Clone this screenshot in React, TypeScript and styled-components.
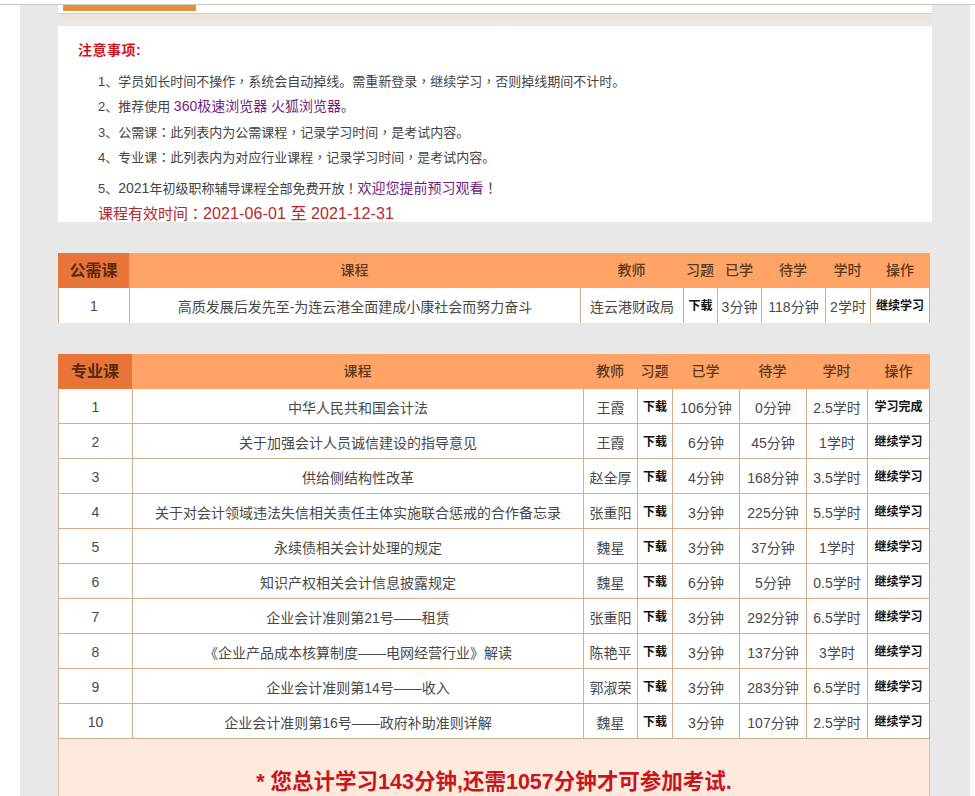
import React from "react";
import styled, { createGlobalStyle } from "styled-components";

const Global = createGlobalStyle`
  html, body { margin: 0; padding: 0; background: #fff; height: 796px; overflow: hidden; }
  body { font-family: "Liberation Sans", "Noto Sans CJK SC", sans-serif; color: #444; }
  #root { height: 796px; overflow: hidden; }
`;

const TopRule = styled.div`height: 4px; border-bottom: 1px solid #c9c9c9;`;
const Panel = styled.main`
  margin-left: 20px; width: 874px; padding: 0 38px; background: #e8e8e8; height: 791px; overflow: hidden;
`;
const TabBar = styled.div`
  height: 8px; background: #fff; border-bottom: 1px solid #edc99a; padding-left: 5px;
`;
const Tab = styled.div`width: 133px; height: 6px; background: #e0923c;`;
const TabShadow = styled.div`height: 12px; background: linear-gradient(#efe3d8, #e9e8ea);`;
const Notice = styled.section`
  background: #fff; height: 184px; padding-top: 12px;
`;
const NoticeTitle = styled.h2`
  margin: 0 0 6px 20px; font-size: 14px; line-height: 24px; font-weight: 700; color: #c8161d; letter-spacing: 0.5px;
`;
const NoticeList = styled.ul`
  list-style: none; margin: 0; padding: 0 0 0 40px; font-size: 13px;
`;
const NoticeItem = styled.li<{ $h: number }>`
  height: ${p => p.$h}px; line-height: ${p => p.$h}px; white-space: nowrap;
`;
const Purple = styled.span`color: #6f1f80;`;
const Larger = styled.span`font-size: 14px;`;
const Mid = styled.span`font-family: "Noto Sans CJK TC", sans-serif;`;
const Validity = styled.li`
  height: 18px; line-height: 18px; font-size: 15px; color: #b22a2e; white-space: nowrap;
`;
const Dates = styled.span`font-size: 16px; letter-spacing: 0.1px;`;
const Table = styled.table<{ $top: number }>`
  display: table; width: 872px; margin-top: ${p => p.$top}px; table-layout: fixed;
  border-collapse: separate; border-spacing: 0; background: #fff;
`;
const HeadCell = styled.th`
  height: 31px; padding: 0 0 4px; background: #ffa366; color: #5c3a20; font-size: 14px; font-weight: 500;
  text-align: center;
`;
const KindCell = styled.th`
  height: 31px; padding: 0 0 4px; background: #e9743a; color: #5a2a10; font-size: 16px; font-weight: 700;
  text-align: center;
`;
const Cell = styled.td<{ $strong?: boolean; $last?: boolean }>`
  height: ${p => (p.$strong ? 32 : 33)}px; padding: ${p => (p.$strong ? "0 0 2px" : "1px 0 0")}; font-size: ${p => (p.$strong ? 12 : 14)}px;
  font-weight: ${p => (p.$strong ? 700 : 400)}; color: ${p => (p.$strong ? "#111" : "#484848")};
  text-align: center; white-space: nowrap; overflow: hidden;
  border-left: 1px solid #cfae8e; border-bottom: 1px solid #cfae8e;
  ${p => p.$last && "border-right: 1px solid #c8a98c;"}
`;
const OpenCell = styled(Cell)`height: ${p => (p.$strong ? 33 : 35)}px; padding-top: 0; border-bottom: 0;`;
const Footer = styled.div`
  width: 870px; height: 54px; background: #fdeadd;
  border: 1px solid #e0bd9c; border-top: 0;
  display: flex; justify-content: center; padding-top: 28px;
`;
const FooterText = styled.strong`
  font-size: 21.5px; line-height: 30px; color: #c8161d; font-weight: 700; white-space: nowrap;
`;

const pubCols = [71, 451, 103, 34, 44, 64, 45, 60];
const proCols = [74, 451, 54, 35, 67, 67, 61, 63];

const rows = [
  ["中华人民共和国会计法", "王霞", "106分钟", "0分钟", "2.5学时", "学习完成"],
  ["关于加强会计人员诚信建设的指导意见", "王霞", "6分钟", "45分钟", "1学时", "继续学习"],
  ["供给侧结构性改革", "赵全厚", "4分钟", "168分钟", "3.5学时", "继续学习"],
  ["关于对会计领域违法失信相关责任主体实施联合惩戒的合作备忘录", "张重阳", "3分钟", "225分钟", "5.5学时", "继续学习"],
  ["永续债相关会计处理的规定", "魏星", "3分钟", "37分钟", "1学时", "继续学习"],
  ["知识产权相关会计信息披露规定", "魏星", "6分钟", "5分钟", "0.5学时", "继续学习"],
  ["企业会计准则第21号——租赁", "张重阳", "3分钟", "292分钟", "6.5学时", "继续学习"],
  ["《企业产品成本核算制度——电网经营行业》解读", "陈艳平", "3分钟", "137分钟", "3学时", "继续学习"],
  ["企业会计准则第14号——收入", "郭淑荣", "3分钟", "283分钟", "6.5学时", "继续学习"],
  ["企业会计准则第16号——政府补助准则详解", "魏星", "3分钟", "107分钟", "2.5学时", "继续学习"],
];

const Head = ({ kind }: { kind: string }) => (
  <thead>
    <tr>
      <KindCell>{kind}</KindCell>
      {["课程", "教师", "习题", "已学", "待学", "学时", "操作"].map(h => <HeadCell key={h}>{h}</HeadCell>)}
    </tr>
  </thead>
);
const Cols = ({ widths }: { widths: number[] }) => (
  <colgroup>{widths.map((w, i) => <col key={i} width={w} />)}</colgroup>
);

export default function App() {
  return (
    <>
      <Global />
      <TopRule />
      <Panel>
        <TabBar><Tab /></TabBar>
        <TabShadow />
        <Notice>
          <NoticeTitle>注意事项:</NoticeTitle>
          <NoticeList>
            <NoticeItem $h={26}>1、学员如长时间不操作<Mid>，</Mid>系统会自动掉线。需重新登录<Mid>，</Mid>继续学习<Mid>，</Mid>否则掉线期间不计时。</NoticeItem>
            <NoticeItem $h={25}>2、推荐使用 <Larger><Purple>360极速浏览器 火狐浏览器</Purple></Larger>。</NoticeItem>
            <NoticeItem $h={25}>3、公需课<Mid>：</Mid>此列表内为公需课程<Mid>，</Mid>记录学习时间<Mid>，</Mid>是考试内容。</NoticeItem>
            <NoticeItem $h={26}>4、专业课<Mid>：</Mid>此列表内为对应行业课程<Mid>，</Mid>记录学习时间<Mid>，</Mid>是考试内容。</NoticeItem>
            <NoticeItem $h={34}>5、<Larger>2021</Larger>年初级职称辅导课程全部免费开放<Mid>！</Mid><Larger><Purple>欢迎您提前预习观看<Mid>！</Mid></Purple></Larger></NoticeItem>
            <Validity>课程有效时间<Mid>：</Mid><Dates>2021-06-01 至 2021-12-31</Dates></Validity>
          </NoticeList>
        </Notice>
        <Table $top={31}>
          <Cols widths={pubCols} />
          <Head kind="公需课" />
          <tbody>
            <tr>
              <OpenCell>1</OpenCell>
              <OpenCell>高质发展后发先至-为连云港全面建成小康社会而努力奋斗</OpenCell>
              <OpenCell>连云港财政局</OpenCell>
              <OpenCell $strong>下载</OpenCell>
              <OpenCell>3分钟</OpenCell>
              <OpenCell>118分钟</OpenCell>
              <OpenCell>2学时</OpenCell>
              <OpenCell $strong $last>继续学习</OpenCell>
            </tr>
          </tbody>
        </Table>
        <Table $top={31}>
          <Cols widths={proCols} />
          <Head kind="专业课" />
          <tbody>
            {rows.map((r, i) => (
              <tr key={i}>
                <Cell>{i + 1}</Cell>
                <Cell>{r[0]}</Cell>
                <Cell>{r[1]}</Cell>
                <Cell $strong>下载</Cell>
                <Cell>{r[2]}</Cell>
                <Cell>{r[3]}</Cell>
                <Cell>{r[4]}</Cell>
                <Cell $strong $last>{r[5]}</Cell>
              </tr>
            ))}
          </tbody>
        </Table>
        <Footer><FooterText>* 您总计学习143分钟,还需1057分钟才可参加考试.</FooterText></Footer>
      </Panel>
    </>
  );
}
